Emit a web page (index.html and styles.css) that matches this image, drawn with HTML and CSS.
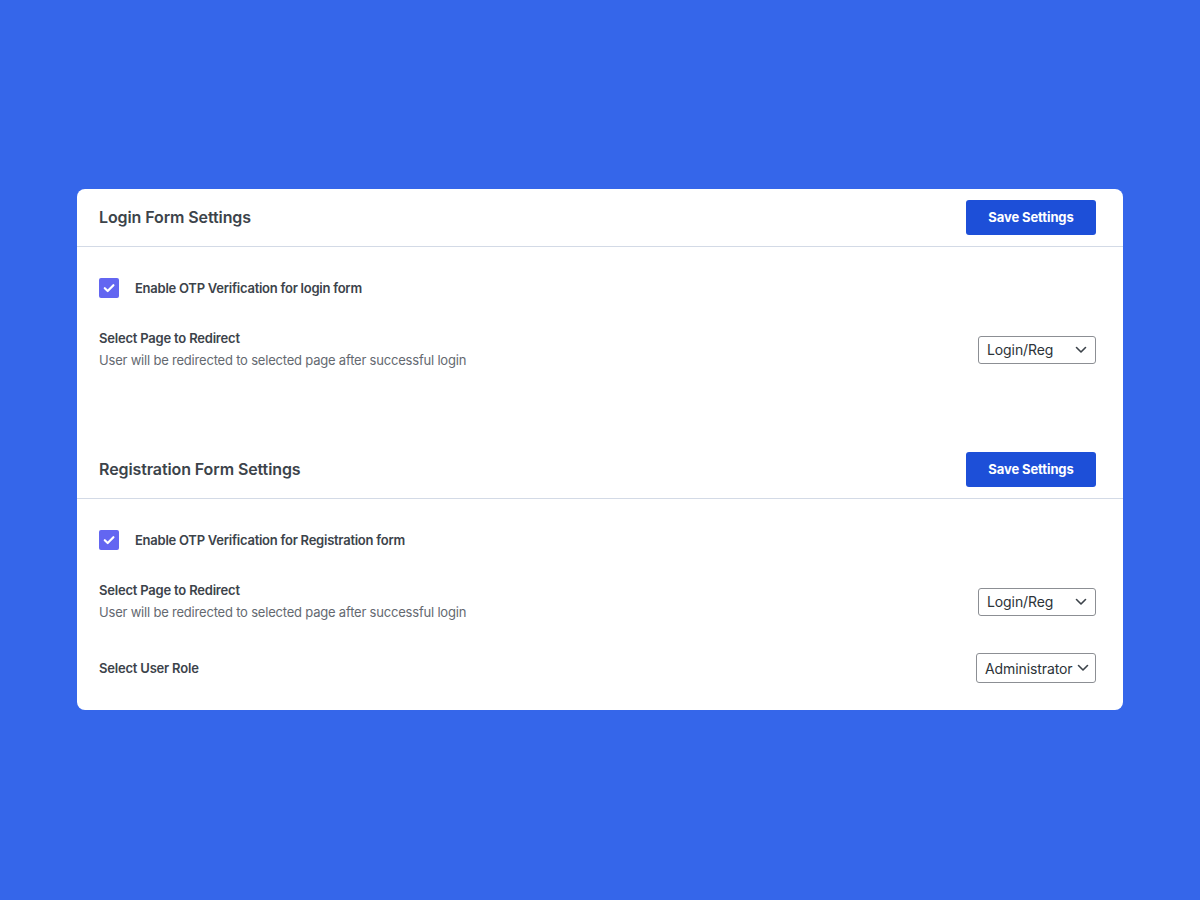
FILE: index.html
```html
<!DOCTYPE html>
<html lang="en">
<head>
<meta charset="utf-8">
<title>OTP Settings</title>
<link rel="stylesheet" href="styles.css">
</head>
<body>
<main class="page">
  <section class="card">
    <div class="section">
      <header class="section-head">
        <h2 class="section-title">Login Form Settings</h2>
        <button class="btn-save" type="button">Save Settings</button>
      </header>
      <div class="section-body body-login">
        <label class="check-row">
          <span class="checkbox"><svg viewBox="0 0 20 20" width="20" height="20"><path d="M5.8 10.2l2.9 2.8L14.4 7.2" fill="none" stroke="#fff" stroke-width="2.2" stroke-linecap="round" stroke-linejoin="round"/></svg></span>
          <span class="check-label">Enable OTP Verification for login form</span>
        </label>
        <div class="field-row">
          <div class="field-text">
            <div class="field-label">Select Page to Redirect</div>
            <div class="field-desc">User will be redirected to selected page after successful login</div>
          </div>
          <div class="select select-page"><span>Login/Reg</span><svg class="chev" viewBox="0 0 12 8" width="12" height="8"><path d="M1.5 1.5L6 6l4.5-4.5" fill="none" stroke="#3c434a" stroke-width="1.6" stroke-linecap="round" stroke-linejoin="round"/></svg></div>
        </div>
      </div>
    </div>
    <div class="section">
      <header class="section-head">
        <h2 class="section-title">Registration Form Settings</h2>
        <button class="btn-save" type="button">Save Settings</button>
      </header>
      <div class="section-body body-reg">
        <label class="check-row">
          <span class="checkbox"><svg viewBox="0 0 20 20" width="20" height="20"><path d="M5.8 10.2l2.9 2.8L14.4 7.2" fill="none" stroke="#fff" stroke-width="2.2" stroke-linecap="round" stroke-linejoin="round"/></svg></span>
          <span class="check-label">Enable OTP Verification for Registration form</span>
        </label>
        <div class="field-row">
          <div class="field-text">
            <div class="field-label">Select Page to Redirect</div>
            <div class="field-desc">User will be redirected to selected page after successful login</div>
          </div>
          <div class="select select-page"><span>Login/Reg</span><svg class="chev" viewBox="0 0 12 8" width="12" height="8"><path d="M1.5 1.5L6 6l4.5-4.5" fill="none" stroke="#3c434a" stroke-width="1.6" stroke-linecap="round" stroke-linejoin="round"/></svg></div>
        </div>
        <div class="field-row role-row">
          <div class="field-text">
            <div class="field-label">Select User Role</div>
          </div>
          <div class="select select-role"><span>Administrator</span><svg class="chev" viewBox="0 0 12 8" width="12" height="8"><path d="M1.5 1.5L6 6l4.5-4.5" fill="none" stroke="#3c434a" stroke-width="1.6" stroke-linecap="round" stroke-linejoin="round"/></svg></div>
        </div>
      </div>
    </div>
  </section>
</main>
</body>
</html>
```

FILE: styles.css
```css
* { box-sizing: border-box; }
html, body {
  margin: 0;
  padding: 0;
}
body {
  background: #3566ea;
  font-family: Inter, "Noto Sans", "Liberation Sans", sans-serif;
  color: #3c434a;
  width: 1200px;
  height: 900px;
}
.page {
  padding: 189px 77px 0 77px;
}
.card {
  background: #fff;
  border-radius: 8px;
  overflow: hidden;
}
.section-head {
  height: 58px;
  display: flex;
  align-items: center;
  justify-content: space-between;
  padding: 0 27px 2px 22px;
  border-bottom: 1px solid #d3dae6;
}
.section-title {
  margin: 0;
  font-size: 16px;
  font-weight: 600;
  color: #3c434a;
  letter-spacing: -0.1px;
}
.btn-save {
  width: 130px;
  height: 35px;
  border: 0;
  border-radius: 3px;
  background: #1d4fd8;
  color: #fff;
  font-family: inherit;
  font-size: 13px;
  font-weight: 700;
  letter-spacing: -0.1px;
  padding: 0;
  margin-top: 1px;
}
.section-body {
  padding: 31px 27px 0 22px;
  display: flex;
  flex-direction: column;
}
.body-login { padding-bottom: 69px; }
.body-reg { padding-bottom: 27px; }
.check-row {
  display: flex;
  align-items: center;
  gap: 16px;
  height: 20px;
}
.checkbox {
  width: 20px;
  height: 20px;
  border-radius: 2px;
  background: #6366f1;
  display: block;
}
.checkbox svg { display: block; }
.check-label {
  font-size: 13px;
  font-weight: 600;
  letter-spacing: -0.25px;
  color: #3c434a;
}
.field-row {
  display: flex;
  align-items: center;
  justify-content: space-between;
  margin-top: 29px;
}
.field-label {
  font-size: 13px;
  font-weight: 600;
  line-height: 22px;
  letter-spacing: -0.2px;
  color: #3c434a;
}
.field-desc {
  font-size: 13px;
  line-height: 23px;
  letter-spacing: -0.2px;
  color: #646970;
}
.role-row { margin-top: 29px; }
.select {
  display: flex;
  align-items: center;
  justify-content: space-between;
  border: 1px solid #8c8f94;
  border-radius: 3px;
  background: #fff;
  font-size: 14px;
  letter-spacing: -0.1px;
  color: #2c3338;
}
.select-page {
  width: 118px;
  height: 28px;
  padding: 0 8px 0 8px;
}
.select-role {
  width: 120px;
  height: 30px;
  padding: 0 6px 0 8px;
}
.chev { display: block; }
```
